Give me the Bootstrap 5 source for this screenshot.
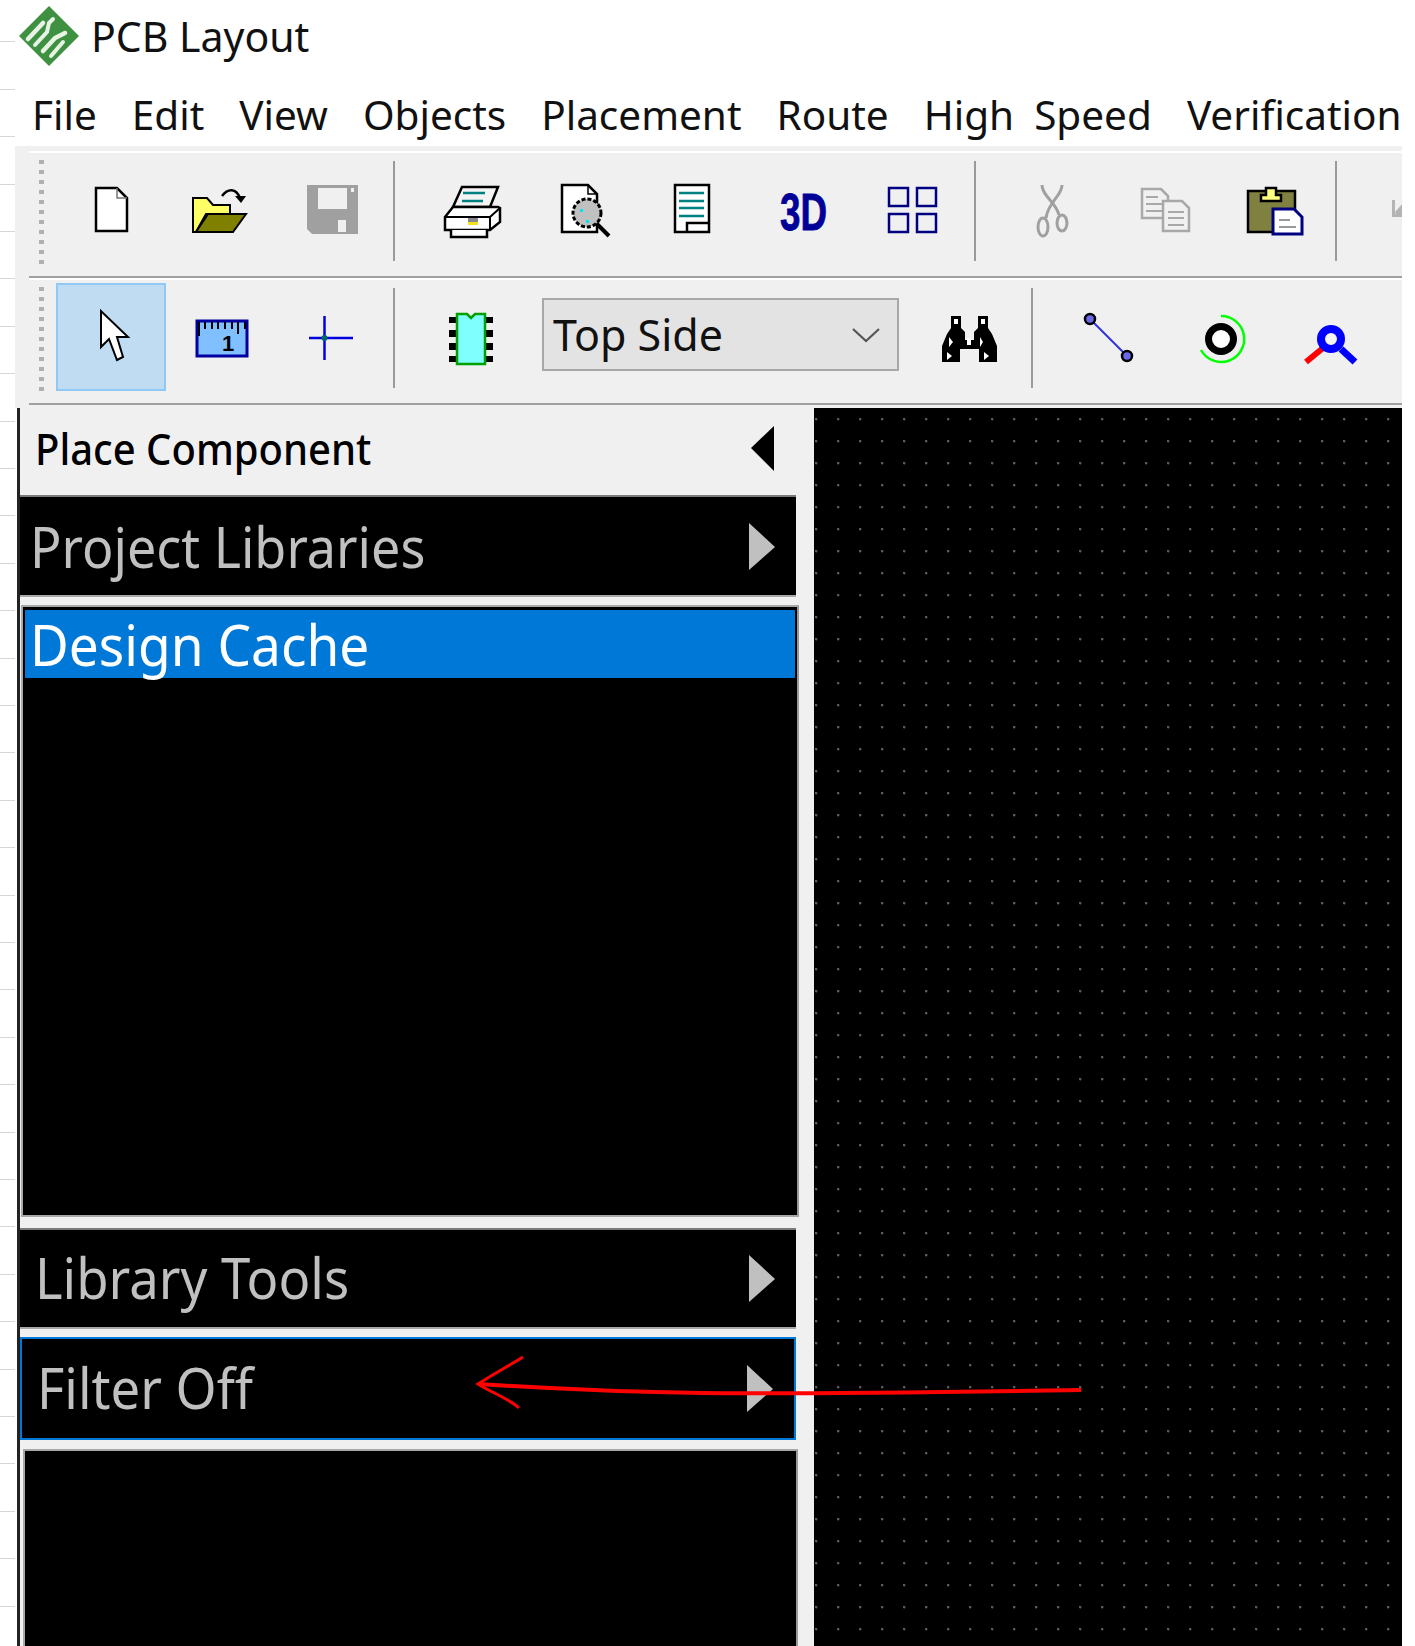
<!DOCTYPE html>
<html lang="en"><head><meta charset="utf-8"><title>PCB Layout</title>
<link href="https://cdn.jsdelivr.net/npm/bootstrap@5.3.0/dist/css/bootstrap.min.css" rel="stylesheet">
<style>
html,body{height:1646px;overflow:hidden}
body{font-family:"Noto Sans","Liberation Sans",sans-serif;color:#111;background-color:#fff}
.gutter{position:absolute;left:0;top:0;width:15px;height:1646px;background:repeating-linear-gradient(to bottom,transparent 0,transparent 46.4px,#d6d6d6 46.4px,#d6d6d6 47.4px);background-position:0 -5px}
.app{width:1402px;height:1646px;overflow:hidden}
.titlebar{height:72px;padding-left:19px;gap:12px;font-size:41px;line-height:1;flex:none}
.menubar{height:74px;padding:12px 0 0 32px;gap:35px;font-size:40.5px;word-spacing:9.5px;line-height:1;margin:0;flex:none;white-space:nowrap}
.menubar .nav-link{padding:0;color:#111}
.toolarea{margin-left:15px;padding:5px 0 0 14px;background:#f0f0f0;height:262px;flex:none}
.toolrow{height:127px;border-top:2px solid #fff;border-bottom:2px solid #a0a0a0;overflow:hidden;flex:none}
.grip{width:27px;flex:none;height:110px;margin-top:7px;background:repeating-linear-gradient(to bottom,#b0b0b0 0,#b0b0b0 4px,transparent 4px,transparent 10px) no-repeat 10px 0/5px 100%}
.tbtn{width:110px;flex:none;height:108px;margin-top:3px;display:flex;align-items:center;justify-content:center;position:relative}
.r1 .tbtn{height:112px;margin-top:0}
.tbtn svg{width:70px;height:70px;flex:none}
.tbtn svg.wideicon{width:100px}
.tbtn.on{background:#bfdcf2;border:2px solid #90c8f6}
.vsep{width:2px;flex:none;height:100px;margin:8px 22px 0 7px;background:#9a9a9a}
.sidecombo{width:357px;height:73px;margin:18px 15px 0;background:#e3e3e3;border:2px solid #a8a8a8;padding:0 17px 0 9px;font-size:43px;line-height:1;flex:none}
.sidecombo svg{width:28px;height:16px}
.workspace{height:1238px;overflow:hidden;flex:none}
.sidepanel{width:797px;margin-left:17px;border-left:3px solid #222;background:#f0f0f0;flex:none}
.ph{height:87px;padding:0 40px 6px 15px;font-size:43px;font-weight:500;line-height:1;color:#000;flex:none}
.ph .lab{transform:scaleX(.93)}
.accbar{width:776px;background:#000;color:#c0c0c0;border-top:2px solid #7a7a7a;border-bottom:2px solid #a8a8a8;padding:0 21px 0 10px;font-size:56px;line-height:1;flex:none}
.accbar.focus{border:2px solid #0078d7}
.listbox{width:778px;margin-left:1px;background:#000;border:2px solid #a8a8a8;border-right-color:#999;flex:none;padding:3px 2px 0;color:#fff}
.listsel{height:68px;background:#0078d7;padding-left:5px;font-size:56px;line-height:1;display:flex;align-items:center}
.listsel .lab{transform:scaleX(.95)}
.b-proj{height:102px}.b-proj .lab{transform:scaleX(.93)}
.b-cache{height:612px;margin-top:8px}.b-tools{height:101px;margin-top:11px;padding-left:15px}
.b-filter{height:103px;margin-top:8px;padding-left:15px}.b-last{height:210px;margin-top:9px;margin-left:3px;width:775px}
.b-tools .lab,.b-filter .lab{margin-top:-4px}
.tri{width:26px;height:47px;flex:none}
.tri.left{width:23px;height:45px}
.lab{display:inline-block;transform-origin:left center;white-space:nowrap;transform:scaleX(.94)}
.canvasview{flex:1 1 auto;background-color:#000;background-image:radial-gradient(circle at 1.2px 1.2px,#5a5a5a 0,#5a5a5a 1px,transparent 1.6px);background-size:22px 22px;background-position:1px 10px}
.inkarrow{position:absolute;left:0;top:0;width:1402px;height:1646px;pointer-events:none}
</style></head>
<body class="position-relative">
<div class="gutter"></div>
<div class="app d-flex flex-column position-relative">
 <div class="titlebar d-flex align-items-center">
  <svg width="60" height="60" viewBox="0 0 60 60"><path d="M30 0L60 30L30 60L0 30Z" fill="#3d9140"/><g fill="none" stroke="#e8f3e6" stroke-linecap="round"><path d="M9 33L24 17" stroke-width="4.5"/><path d="M16 39L28 26L30 17L34 13" stroke-width="4"/><path d="M24 45L36 32L46 27" stroke-width="4.5"/><path d="M32 50L44 36" stroke-width="4"/></g></svg>
  <span>PCB Layout</span>
 </div>
 <ul class="nav menubar align-items-center flex-nowrap">
  <li class="nav-item"><a class="nav-link" href="#">File</a></li>
  <li class="nav-item"><a class="nav-link" href="#">Edit</a></li>
  <li class="nav-item"><a class="nav-link" href="#">View</a></li>
  <li class="nav-item"><a class="nav-link" href="#">Objects</a></li>
  <li class="nav-item"><a class="nav-link" href="#">Placement</a></li>
  <li class="nav-item"><a class="nav-link" href="#">Route</a></li>
  <li class="nav-item"><a class="nav-link" href="#">High Speed</a></li>
  <li class="nav-item"><a class="nav-link" href="#">Verification</a></li>
 </ul>
 <div class="toolarea d-flex flex-column">
  <div class="toolrow r1 d-flex">
   <div class="grip"></div>
   <div class="tbtn"><svg viewBox="0 0 70 70"><path d="M20 14H41L51 24V57H20Z" fill="#fff" stroke="#000" stroke-width="2.5"/><path d="M41 14V24H51" fill="none" stroke="#777" stroke-width="1.5"/></svg></div>
   <div class="tbtn"><svg viewBox="0 0 70 70"><path d="M7 24H21L27 31H44V40H20L10 58H7Z" fill="#ffff66" stroke="#000" stroke-width="2"/><path d="M10 58L22 40H60L47 58Z" fill="#808000" stroke="#000" stroke-width="2"/><path d="M36 22C42 14 50 14 54 24" fill="none" stroke="#000" stroke-width="2.5"/><path d="M49 22H60L55 29Z"/></svg></div>
   <div class="tbtn"><svg viewBox="0 0 70 70"><path d="M11 11H62V60H16L11 55Z" fill="#a0a0a0"/><rect x="22" y="14" width="29" height="21" fill="#f0f0f0"/><rect x="55" y="14" width="3" height="4" fill="#f0f0f0"/><rect x="42" y="46" width="8" height="12" fill="#f0f0f0"/></svg></div>
   <div class="vsep"></div>
   <div class="tbtn"><svg viewBox="0 0 70 70"><path d="M25 13H61L53 33H16Z" fill="#f4f4f4" stroke="#000" stroke-width="2.5"/><path d="M26 19H48M25 27H46" stroke="#008080" stroke-width="2.5"/><path d="M8 43L16 33H61L63 34V48L53 56H8Z" fill="#fff" stroke="#000" stroke-width="2.5"/><path d="M8 43H53L63 34M53 43V56" fill="none" stroke="#000" stroke-width="2"/><path d="M14 56V63H50V56" fill="#fff" stroke="#000" stroke-width="2.5"/><rect x="31" y="44" width="10" height="4" fill="#888"/><rect x="31" y="48" width="10" height="3" fill="#f0e020"/></svg></div>
   <div class="tbtn"><svg viewBox="0 0 70 70"><path d="M15 11H41L50 20V58H15Z" fill="#fff" stroke="#000" stroke-width="2.5"/><path d="M41 11V20H50" fill="none" stroke="#000" stroke-width="1.5"/><circle cx="40" cy="39" r="14" fill="#c0c0c0" stroke="#000" stroke-width="3" stroke-dasharray="4 2"/><path d="M50 50L62 62" stroke="#000" stroke-width="4"/><rect x="33" y="35" width="3" height="3" fill="#00e5ee"/><rect x="39" y="46" width="3" height="3" fill="#00e5ee"/></svg></div>
   <div class="tbtn"><svg viewBox="0 0 70 70"><path d="M18 11H52V58H18Z" fill="#fff" stroke="#000" stroke-width="2.5"/><path d="M22 19H47M22 27H47M22 34H47M22 42H47" stroke="#008080" stroke-width="2.5"/><path d="M30 58V49H52" fill="none" stroke="#000" stroke-width="2.5"/></svg></div>
   <div class="tbtn"><svg class="wideicon" viewBox="-15 0 100 70"><text x="13" y="56" font-family="Liberation Sans" font-weight="700" font-size="52" fill="#000099" stroke="#000099" stroke-width=".8" textLength="47" lengthAdjust="spacingAndGlyphs">3D</text></svg></div>
   <div class="tbtn"><svg viewBox="0 0 70 70"><g fill="none" stroke="#000080" stroke-width="2.500"><rect x="12" y="14" width="19" height="18"/><rect x="40" y="14" width="19" height="18"/><rect x="12" y="40" width="19" height="18"/><rect x="40" y="40" width="19" height="18"/></g></svg></div>
   <div class="vsep"></div>
   <div class="tbtn"><svg viewBox="0 0 70 70"><g fill="none" stroke="#a0a0a0" stroke-width="3"><path d="M24 11C24 22 38 28 41 41"/><path d="M44 11C44 22 30 28 28 44"/><ellipse cx="25" cy="53" rx="5" ry="9"/><ellipse cx="44" cy="49" rx="5" ry="8"/></g></svg></div>
   <div class="tbtn"><svg viewBox="0 0 70 70"><g fill="#f0f0f0" stroke="#a8a8a8" stroke-width="2.5"><path d="M14 15H33L40 22V44H14Z"/><path d="M35 27H54L61 34V57H35Z"/><path d="M18 23H30M18 30H34M18 37H34M40 38H56M40 44H56M40 51H56" fill="none" stroke-width="2"/></g></svg></div>
   <div class="tbtn"><svg viewBox="0 0 70 70"><rect x="10" y="17" width="47" height="41" fill="#808040" stroke="#000" stroke-width="2.5"/><path d="M23 27V21H28V14H38V21H43V27Z" fill="#ffff80" stroke="#000" stroke-width="2.5"/><path d="M35 35H56L64 43V60H35Z" fill="#fff" stroke="#000080" stroke-width="3"/><path d="M41 46H52M41 53H58" stroke="#999" stroke-width="2"/></svg></div>
   <div class="vsep"></div>
   <div class="tbtn"><svg viewBox="0 0 70 70"><path d="M13 26H16V40H22V43H13ZM16 38L24 29V43H18Z" fill="#b4b4b4"/></svg></div>
  </div>
  <div class="toolrow r2 d-flex">
   <div class="grip"></div>
   <div class="tbtn on"><svg viewBox="0 0 70 70"><path d="M25 9V45L33 37L41 58L47 55L41 35H52Z" fill="#fff" stroke="#000" stroke-width="2"/></svg></div>
   <div class="tbtn"><svg viewBox="0 0 70 70"><rect x="11" y="19" width="50" height="35" fill="#80c0ff" stroke="#0000a0" stroke-width="3"/><path d="M13 20V34M19 20V27M26 20V27M32 20V27M39 20V27M46 20V27M52 20V32M59 20V27" stroke="#000" stroke-width="2"/><text x="36" y="49" font-family="Liberation Sans" font-weight="700" font-size="22" fill="#000">1</text></svg></div>
   <div class="tbtn"><svg viewBox="0 0 70 70"><path d="M13 36H57M28.500 14V58" stroke="#0000e0" stroke-width="2.500"/><circle cx="28.500" cy="36" r="3" fill="#006868"/></svg></div>
   <div class="vsep"></div>
   <div class="tbtn"><svg viewBox="0 0 70 70"><path d="M12 15H56V21H12ZM12 28H56V35H12ZM12 41H56V48H12ZM12 54H56V60H12Z"/><path d="M20 12H30L34 16L38 12H48V62H20Z" fill="#80ffff" stroke="#00a000" stroke-width="2.500"/></svg></div>
   <div class="sidecombo d-flex align-items-center justify-content-between"><span>Top Side</span><svg viewBox="0 0 28 16"><path d="M1 2L14 14L27 2" fill="none" stroke="#555" stroke-width="2.200"/></svg></div>
   <div class="tbtn"><svg viewBox="0 0 70 70"><path d="M17 14H27V26L31 30V38H40V30L44 26V14H54V26L58 32L63 44V60H45V47H26V60H8V44L13 32L17 26Z"/><g fill="#fff"><rect x="20" y="17" width="4" height="5"/><rect x="47" y="17" width="4" height="5"/><rect x="33" y="36" width="4" height="7"/><path d="M15 35L19 40L15 45Z"/><path d="M46 35L49 40L46 45Z"/><path d="M13 50L18 54L13 58Z"/><path d="M50 50L55 54L50 58Z"/></g></svg></div>
   <div class="vsep"></div>
   <div class="tbtn"><svg viewBox="0 0 70 70"><path d="M15 17L52 54" stroke="#3030e0" stroke-width="2"/><circle cx="15" cy="17" r="5" fill="#6a6ae8" stroke="#000" stroke-width="2.500"/><circle cx="52" cy="54" r="5" fill="#6a6ae8" stroke="#000" stroke-width="2.500"/></svg></div>
   <div class="tbtn"><svg viewBox="0 0 70 70"><path d="M36 14A23 23 0 1 1 16 48" fill="none" stroke="#00ff00" stroke-width="2.500"/><circle cx="36" cy="37" r="12.500" fill="#fff" stroke="#000" stroke-width="7"/></svg></div>
   <div class="tbtn"><svg viewBox="0 0 70 70"><path d="M28 46L11 60" stroke="#f00" stroke-width="6"/><path d="M46 47L60 60" stroke="#00f" stroke-width="7"/><circle cx="36" cy="37" r="10" fill="#f4f4f4" stroke="#00f" stroke-width="8"/></svg></div>
  </div>
 </div>
 <div class="workspace d-flex">
  <div class="sidepanel d-flex flex-column">
   <div class="ph d-flex align-items-center justify-content-between"><span class="lab">Place Component</span><svg class="tri left" viewBox="0 0 23 45"><path d="M23 0V45L0 22Z"/></svg></div>
   <div class="accbar b-proj d-flex align-items-center justify-content-between"><span class="lab">Project Libraries</span><svg class="tri" viewBox="0 0 26 47"><path d="M0 0L26 24L0 47Z" fill="#c0c0c0"/></svg></div>
   <div class="listbox b-cache"><div class="listsel"><span class="lab">Design Cache</span></div></div>
   <div class="accbar b-tools d-flex align-items-center justify-content-between"><span class="lab">Library Tools</span><svg class="tri" viewBox="0 0 26 47"><path d="M0 0L26 24L0 47Z" fill="#c0c0c0"/></svg></div>
   <div class="accbar focus b-filter d-flex align-items-center justify-content-between"><span class="lab">Filter Off</span><svg class="tri" viewBox="0 0 26 47"><path d="M0 0L26 24L0 47Z" fill="#c0c0c0"/></svg></div>
   <div class="listbox b-last"></div>
  </div>
  <div class="canvasview"></div>
 </div>
 <svg class="inkarrow" viewBox="0 0 1402 1646"><path d="M1081 1390C950 1392 800 1394 702 1393C620 1392 540 1388 479 1384" fill="none" stroke="#f00" stroke-width="4"/><path d="M523 1357C505 1368 490 1376 478 1384C490 1392 508 1398 519 1408" fill="none" stroke="#f00" stroke-width="3"/></svg>
</div>
</body></html>
